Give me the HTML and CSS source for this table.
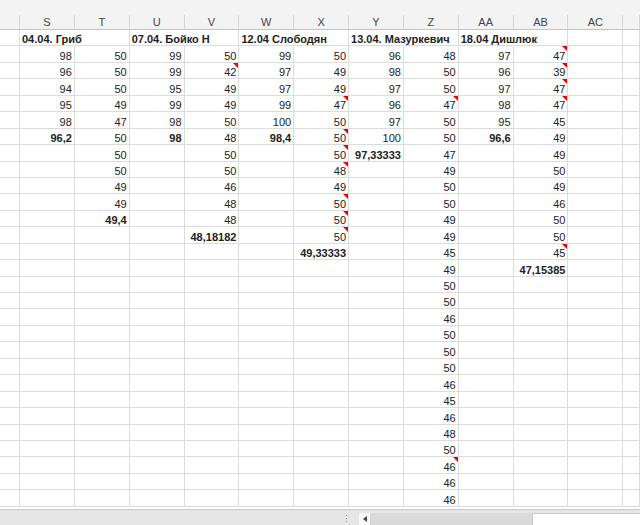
FILE: index.html
```html
<!DOCTYPE html>
<html>
<head>
<meta charset="utf-8">
<link rel="stylesheet" href="styles.css">
</head>
<body>
<div class="app">
  <div class="topband"></div>
  <div class="sheet">
    <div class="r hdr"><span></span><span>S</span><span>T</span><span>U</span><span>V</span><span>W</span><span>X</span><span>Y</span><span>Z</span><span>AA</span><span>AB</span><span>AC</span><span></span></div>
    <div class="r"><span></span><span class="t b s">04.04. Гриб</span><span></span><span class="t b s">07.04. Бойко Н</span><span></span><span class="t b s">12.04 Слободян</span><span></span><span class="t b s">13.04. Мазуркевич</span><span></span><span class="t b s">18.04 Дишлюк</span><span></span><span></span><span></span></div>
    <div class="r"><span></span><span>98</span><span>50</span><span>99</span><span>50</span><span>99</span><span>50</span><span>96</span><span>48</span><span>97</span><span class="n">47</span><span></span><span></span></div>
    <div class="r"><span></span><span>96</span><span>50</span><span>99</span><span class="n">42</span><span>97</span><span>49</span><span>98</span><span>50</span><span>96</span><span class="n">39</span><span></span><span></span></div>
    <div class="r"><span></span><span>94</span><span>50</span><span>95</span><span>49</span><span>97</span><span>49</span><span>97</span><span>50</span><span>97</span><span class="n">47</span><span></span><span></span></div>
    <div class="r"><span></span><span>95</span><span>49</span><span>99</span><span>49</span><span>99</span><span class="n">47</span><span>96</span><span class="n">47</span><span>98</span><span class="n">47</span><span></span><span></span></div>
    <div class="r"><span></span><span>98</span><span>47</span><span>98</span><span>50</span><span>100</span><span>50</span><span>97</span><span>50</span><span>95</span><span>45</span><span></span><span></span></div>
    <div class="r"><span></span><span class="b">96,2</span><span>50</span><span class="b">98</span><span>48</span><span class="b">98,4</span><span class="n">50</span><span>100</span><span>50</span><span class="b">96,6</span><span>49</span><span></span><span></span></div>
    <div class="r"><span></span><span></span><span>50</span><span></span><span>50</span><span></span><span class="n">50</span><span class="b">97,33333</span><span>47</span><span></span><span>49</span><span></span><span></span></div>
    <div class="r"><span></span><span></span><span>50</span><span></span><span>50</span><span></span><span class="n">48</span><span></span><span>49</span><span></span><span>50</span><span></span><span></span></div>
    <div class="r"><span></span><span></span><span>49</span><span></span><span>46</span><span></span><span>49</span><span></span><span>50</span><span></span><span>49</span><span></span><span></span></div>
    <div class="r"><span></span><span></span><span>49</span><span></span><span>48</span><span></span><span class="n">50</span><span></span><span>50</span><span></span><span>46</span><span></span><span></span></div>
    <div class="r"><span></span><span></span><span class="b">49,4</span><span></span><span>48</span><span></span><span class="n">50</span><span></span><span>49</span><span></span><span>50</span><span></span><span></span></div>
    <div class="r"><span></span><span></span><span></span><span></span><span class="b">48,18182</span><span></span><span class="n">50</span><span></span><span>49</span><span></span><span>50</span><span></span><span></span></div>
    <div class="r"><span></span><span></span><span></span><span></span><span></span><span></span><span class="b">49,33333</span><span></span><span>45</span><span></span><span class="n">45</span><span></span><span></span></div>
    <div class="r"><span></span><span></span><span></span><span></span><span></span><span></span><span></span><span></span><span>49</span><span></span><span class="b">47,15385</span><span></span><span></span></div>
    <div class="r"><span></span><span></span><span></span><span></span><span></span><span></span><span></span><span></span><span>50</span><span></span><span></span><span></span><span></span></div>
    <div class="r"><span></span><span></span><span></span><span></span><span></span><span></span><span></span><span></span><span>50</span><span></span><span></span><span></span><span></span></div>
    <div class="r"><span></span><span></span><span></span><span></span><span></span><span></span><span></span><span></span><span>46</span><span></span><span></span><span></span><span></span></div>
    <div class="r"><span></span><span></span><span></span><span></span><span></span><span></span><span></span><span></span><span>50</span><span></span><span></span><span></span><span></span></div>
    <div class="r"><span></span><span></span><span></span><span></span><span></span><span></span><span></span><span></span><span>50</span><span></span><span></span><span></span><span></span></div>
    <div class="r"><span></span><span></span><span></span><span></span><span></span><span></span><span></span><span></span><span>50</span><span></span><span></span><span></span><span></span></div>
    <div class="r"><span></span><span></span><span></span><span></span><span></span><span></span><span></span><span></span><span>46</span><span></span><span></span><span></span><span></span></div>
    <div class="r"><span></span><span></span><span></span><span></span><span></span><span></span><span></span><span></span><span>45</span><span></span><span></span><span></span><span></span></div>
    <div class="r"><span></span><span></span><span></span><span></span><span></span><span></span><span></span><span></span><span>46</span><span></span><span></span><span></span><span></span></div>
    <div class="r"><span></span><span></span><span></span><span></span><span></span><span></span><span></span><span></span><span>48</span><span></span><span></span><span></span><span></span></div>
    <div class="r"><span></span><span></span><span></span><span></span><span></span><span></span><span></span><span></span><span>50</span><span></span><span></span><span></span><span></span></div>
    <div class="r"><span></span><span></span><span></span><span></span><span></span><span></span><span></span><span></span><span class="n">46</span><span></span><span></span><span></span><span></span></div>
    <div class="r"><span></span><span></span><span></span><span></span><span></span><span></span><span></span><span></span><span>46</span><span></span><span></span><span></span><span></span></div>
    <div class="r"><span></span><span></span><span></span><span></span><span></span><span></span><span></span><span></span><span>46</span><span></span><span></span><span></span><span></span></div>
  </div>
  <div class="bottombar">
    <div class="tabs"></div>
    <div class="grip"><i></i><i></i><i></i></div>
    <div class="hscroll">
      <div class="arrow"><svg width="4" height="6" viewBox="0 0 4 6"><path d="M4 0 L0 3 L4 6 Z" fill="#444"/></svg></div>
      <div class="track"></div>
      <div class="thumb"></div>
    </div>
  </div>
</div>
</body>
</html>
```

FILE: styles.css
```css
html, body {
  margin: 0;
  padding: 0;
  background: #ffffff;
}

.app {
  width: 640px;
  height: 525px;
  overflow: hidden;
  display: flex;
  flex-direction: column;
  font-family: "Liberation Sans", Arial, sans-serif;
  font-size: 11px;
  color: #222;
}

.topband {
  height: 15px;
  flex: none;
  background: #f3f3f3;
}

.sheet {
  height: 494px;
  flex: none;
  overflow: hidden;
  background: #fff;
}

.r {
  display: grid;
  grid-template-columns: 20px repeat(11, 54.85px) 1fr;
  height: 16.45px;
}

.r > span {
  box-sizing: border-box;
  border-right: 1px solid #dcdcdc;
  border-bottom: 1px solid #dcdcdc;
  display: flex;
  align-items: flex-end;
  justify-content: flex-end;
  padding-right: 2px;
  line-height: 11px;
  white-space: nowrap;
  position: relative;
  min-width: 0;
}

.r > span.t {
  justify-content: flex-start;
  padding-left: 2px;
  padding-right: 0;
}

.r > span.s {
  border-right-color: transparent;
}

.b {
  font-weight: bold;
}

.n::after {
  content: "";
  position: absolute;
  top: 0;
  right: 0;
  width: 0;
  height: 0;
  border-top: 5px solid #ee0000;
  border-left: 5px solid transparent;
}

.hdr {
  height: 15px;
  background: #f3f3f3;
}

.hdr > span {
  justify-content: center;
  align-items: center;
  padding: 0;
  line-height: 13px;
  color: #444;
  border-right-color: #d4d4d4;
  border-bottom-color: #c3c3c3;
}

.bottombar {
  flex: 1;
  display: flex;
  background: #e6e6e6;
  border-top: 1px solid #c8c8c8;
}

.tabs {
  width: 345px;
}

.grip {
  width: 4px;
  display: flex;
  flex-direction: column;
  justify-content: center;
  gap: 2px;
  padding-top: 2px;
}

.grip i {
  display: block;
  width: 1px;
  height: 1px;
  background: #8a8a8a;
  margin-left: 1px;
}

.hscroll {
  margin-left: 10px;
  flex: 1;
  display: flex;
  padding-top: 3px;
}

.arrow {
  width: 11px;
  background: #f7f7f7;
  display: flex;
  align-items: center;
  justify-content: center;
  border-right: 1px solid #d0d0d0;
}

.track {
  width: 161px;
  background: #dadada;
}

.thumb {
  flex: 1;
  background: #fff;
  border-left: 1px solid #c8c8c8;
  border-top: 1px solid #c8c8c8;
}
```
